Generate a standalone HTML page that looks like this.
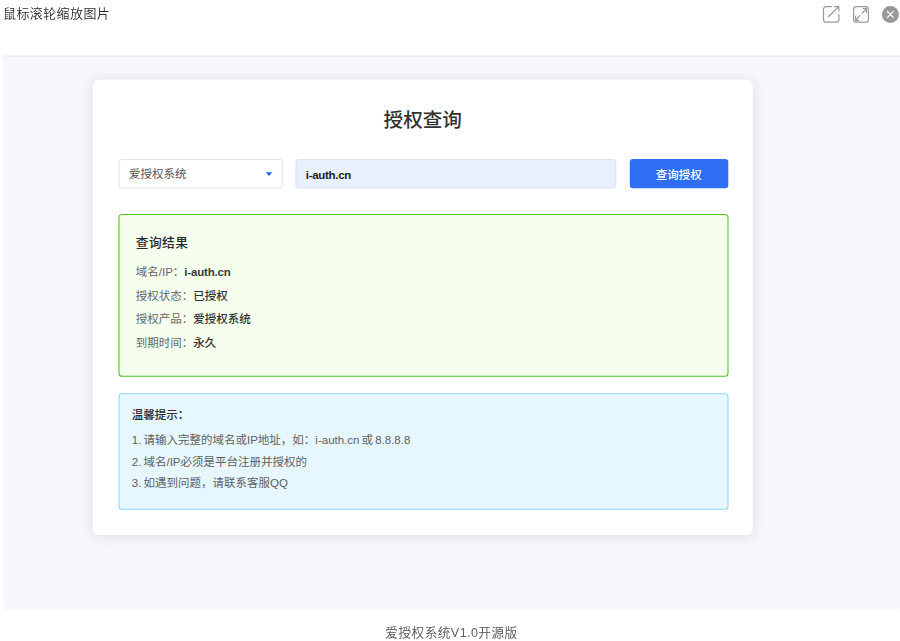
<!DOCTYPE html>
<html lang="zh-CN">
<head>
<meta charset="utf-8">
<title>授权查询</title>
<style>
  html, body { margin: 0; padding: 0; }
  body {
    width: 900px; height: 641px; overflow: hidden; position: relative;
    background: #fff;
    font-family: "Liberation Sans", "Noto Sans CJK SC", sans-serif;
    color: #333;
  }
  .shapes { position: absolute; left: 0; top: 0; width: 900px; height: 641px; }
  .t { position: absolute; white-space: nowrap; margin: 0; line-height: 20px; font-size: 11.5px; }
  .hdr { left: 3px; top: 4px; font-size: 13px; letter-spacing: 0.4px; color: #2c2c2c; font-weight: 350; will-change: transform; }
  .title { left: 93px; width: 659.5px; top: 100px; text-align: center; font-size: 19.6px; line-height: 40px; font-weight: 500; color: #333; }
  .selt { left: 129.1px; top: 163.6px; color: #555; }
  .inpt { left: 305.8px; top: 164.8px; color: #222; font-weight: 700; letter-spacing: -0.3px; }
  .btnt { left: 629.4px; width: 98.5px; top: 165.3px; text-align: center; color: #fff; font-weight: 500; }
  .rh { left: 135.8px; top: 233px; font-size: 12.7px; letter-spacing: 0.45px; font-weight: 500; color: #2a2a2a; }
  .rl { left: 135.8px; color: #666; }
  .rl b { color: #333; font-weight: 500; }
  .rl b.lat { font-weight: 700; letter-spacing: -0.2px; color: #3a3a3a; }
  .th { left: 131.8px; top: 404.5px; font-weight: 500; color: #2a2a2a; }
  .tl { left: 131.8px; color: #606060; word-spacing: -1.1px; }
  .cap { left: 3px; width: 897px; top: 623.4px; text-align: center; font-size: 12.6px; color: #505050; font-weight: 350; letter-spacing: 0.5px; will-change: transform; }
  .cap span { color: #606060; letter-spacing: 0.4px; }
</style>
</head>
<body>
  <svg class="shapes" viewBox="0 0 900 641">
    <!-- image stage -->
    <path d="M3.300 55.100H900V605.800a4 4 0 0 1-4 4H7.300a4 4 0 0 1-4-4Z" fill="#f5f7fa"/>
    <rect x="3.300" y="55.600" width="896.700" height="1.300" fill="#ebedf0"/>
    <!-- card -->
    <rect x="92.900" y="79.600" width="659.900" height="455.400" rx="6.200" fill="#fff" style="filter: drop-shadow(0 1.650px 6.500px rgba(0,0,0,0.105));"/>
    <!-- select -->
    <rect x="119" y="159.400" width="163.700" height="28.600" rx="3" fill="#fff" stroke="#e2e5ea" stroke-width="1.050"/>
    <path d="M265.700 172.300h6.600l-3.300 3.700z" fill="#2563eb"/>
    <!-- input -->
    <rect x="296" y="159.400" width="319.800" height="28.600" rx="3" fill="#e8f0fe" stroke="#dee3ee" stroke-width="1.050"/>
    <!-- button -->
    <rect x="629.800" y="159" width="98.500" height="29.300" rx="3.300" fill="#2e6ef4"/>
    <!-- result -->
    <rect x="119" y="214.400" width="609" height="161.800" rx="3" fill="#f6ffed" stroke="#52c41a" stroke-width="1.050"/>
    <!-- tips -->
    <rect x="119" y="393.670" width="609" height="115.660" rx="3" fill="#e6f7ff" stroke="#91d5ff" stroke-width="1.050"/>
    <!-- toolbar icons -->
    <g fill="none" stroke="#999" stroke-width="1.200" stroke-linecap="round" stroke-linejoin="round">
      <path d="M831.500 6.600H826a2.500 2.500 0 0 0-2.500 2.500v10.600a2.500 2.500 0 0 0 2.500 2.500h10.400a2.500 2.500 0 0 0 2.500-2.500V14.500"/>
      <path d="M828.500 16.500L838.900 6.600M834.500 6.600h4.400v4.400"/>
      <rect x="853.600" y="6.600" width="14.800" height="15.600" rx="2.500"/>
      <path d="M855.600 20.300l4.200-4.700M862.100 13.400l4.300-4.900M863.200 8.500h3.200v3.900M855.600 16.200v4.100h3.200"/>
    </g>
    <circle cx="890.400" cy="14.400" r="8.500" fill="#999"/>
    <path d="M887.500 11.500l5.800 5.800M893.300 11.500l-5.800 5.800" stroke="#fff" stroke-width="1.200" stroke-linecap="round" fill="none"/>
  </svg>

  <div class="t hdr">鼠标滚轮缩放图片</div>
  <h1 class="t title">授权查询</h1>

  <div class="t selt">爱授权系统</div>
  <div class="t inpt">i-auth.cn</div>
  <div class="t btnt">查询授权</div>

  <h3 class="t rh">查询结果</h3>
  <p class="t rl" style="top:261.7px">域名/IP：<b class="lat">i-auth.cn</b></p>
  <p class="t rl" style="top:285.8px">授权状态：<b>已授权</b></p>
  <p class="t rl" style="top:309.1px">授权产品：<b>爱授权系统</b></p>
  <p class="t rl" style="top:332.8px">到期时间：<b>永久</b></p>

  <h4 class="t th">温馨提示：</h4>
  <p class="t tl" style="top:429.8px">1. 请输入完整的域名或IP地址，如：i-auth.cn 或 8.8.8.8</p>
  <p class="t tl" style="top:451.7px">2. 域名/IP必须是平台注册并授权的</p>
  <p class="t tl" style="top:472.8px">3. 如遇到问题，请联系客服QQ</p>

  <div class="t cap">爱授权系统<span>V1.0</span>开源版</div>
</body>
</html>
